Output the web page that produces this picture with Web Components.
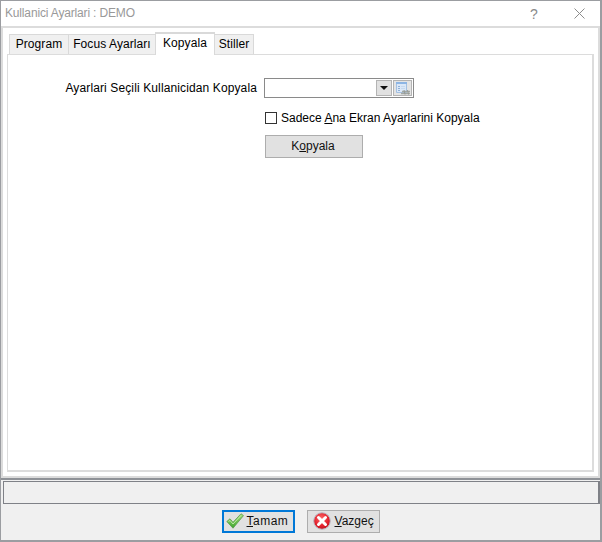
<!DOCTYPE html>
<html><head><meta charset="utf-8"><style>
html,body{margin:0;padding:0;background:#fff}
body{font:12px "Liberation Sans",Arial,sans-serif;color:#000}
</style></head><body>
<app-window></app-window>
<script>
class Base extends HTMLElement{
  constructor(){super();this.attachShadow({mode:'open'}).innerHTML=this.constructor.html}
}
class TitleBar extends Base{static html=`<style>
:host{display:flex;align-items:center;height:25px;flex:none;background:#fff;color:#999;font-size:12px;padding-left:4px}
.t{flex:1;letter-spacing:-.16px;padding-bottom:2px}
.q{width:14px;font-size:14px;color:#8a8a8a;text-align:center;margin-right:33px}
svg{display:block;margin-right:15px;margin-bottom:1px}
</style><span class="t"><slot></slot></span><span class="q">?</span><svg width="11" height="11" viewBox="0 0 11 11"><path d="M.5.5l10 10M10.500.5l-10 10" stroke="#8c8c8c" fill="none"/></svg>`}
class TabItem extends Base{static html=`<style>
:host{display:block;box-sizing:border-box;height:20px;margin-top:2px;padding:2px 0 0;text-align:center;background:#f0f0f0;border:1px solid #d9d9d9;border-bottom:0;margin-left:-1px;color:#000;white-space:nowrap;letter-spacing:.08px}
:host([active]){height:23px;margin-top:0;margin-bottom:-1px;padding-top:2px;background:#fff;position:relative;z-index:1;border-top:2px solid #d9d9d9;border-left-width:1px;border-right-width:1px}
</style><slot></slot>`}
class TabStrip extends Base{static html=`<style>
:host{display:flex;height:22px;padding-left:3px;flex:none}
</style><slot></slot>`}
class TabSheet extends Base{static html=`<style>
:host{display:block;flex:1;background:#fff;border:2px solid #dcdcdc;border-width:1px 2px 2px 1px;box-sizing:border-box;padding:23px 0 0 0}
</style><slot></slot>`}
class PageControl extends Base{static html=`<style>
:host{display:flex;flex-direction:column;flex:1;min-height:0;box-sizing:border-box;background:#fff;border:solid #dcdcdc;border-width:2px 2px 2px 2px;padding:4px 4px 4px 4px}
</style><slot></slot>`}
class LookupBox extends Base{static html=`<style>
:host{display:flex;box-sizing:border-box;width:150px;height:20px;border:1px solid #8a8a8a;background:#fff;justify-content:flex-end;align-items:stretch;padding:1px}
.b{box-sizing:border-box;width:16px;background:#e1e1e1;border:1px solid #b4b4b4;display:flex;align-items:center;justify-content:center;margin-right:1px}
.g{width:19px;margin:0;background:#e4e4e4}
</style><div class="b"><svg width="8" height="4" viewBox="0 0 8 4"><path d="M0 0h8L4 4z" fill="#111"/></svg></div><div class="b g"><svg width="16" height="15" viewBox="0 0 16 15"><path d="M1.500 1.500h10v10h-10z" fill="#dbe8f8" stroke="#a4c1e3"/><path d="M1 1h11v2H1z" fill="#8db5e4"/><path d="M3 5.500h2M3 7.500h2M3 9.500h2" stroke="#8fb0d8"/><path d="M6 5.500h4M6 7.500h4" stroke="#c6d9ef"/><path d="M7 10.500h8M6 12.500h9" stroke="#a3a8a3" stroke-width="1.300"/><path d="M9 9l1 4.500M12.500 9l1 4.500" stroke="#969b96"/></svg></div>`}
class CheckRow extends Base{static html=`<style>
:host{display:flex;align-items:center;gap:4px;height:14px}
i{box-sizing:border-box;display:block;width:12px;height:12px;border:1px solid #333;background:#fff;margin-left:0}
span{position:relative;top:0}
</style><i></i><span><slot></slot></span>`}
class FlatButton extends Base{static html=`<style>
:host{display:flex;align-items:center;justify-content:center;box-sizing:border-box;border:1px solid #adadad;background:#e1e1e1;white-space:nowrap;width:98px;height:23px;color:#111;padding-bottom:1px}
:host([default]){border:2px solid #0078d7}
</style><slot></slot>`}
class FooterBar extends Base{static html=`<style>
:host{display:flex;flex-direction:column;flex:none;height:62px;box-sizing:border-box;background:#f0f0f0;border-top:2px solid #8f9297;padding:1px 0 0 2px}
.s{box-sizing:border-box;height:23px;margin-right:0;border:1px solid #7f8187;border-width:1px 2px 1px 1px;background:#f0f0f0;flex:none}
.a{flex:1;display:flex;justify-content:center;gap:12px;padding:6px 2px 0 0}
</style><div class="s"></div><div class="a"><slot></slot></div>`}
class FormRow extends Base{static html=`<style>
:host{display:flex;align-items:center;margin-left:0}
.l{width:249px;text-align:right;margin-right:7px;letter-spacing:.12px}
</style><span class="l"><slot name="label"></slot></span><slot></slot>`}
class AppWindow extends Base{static html=`<style>
:host{display:flex;flex-direction:column;box-sizing:border-box;width:602px;height:542px;border:1px solid #9b9da1;border-width:1px 2px 2px 1px;background:#fff;font:12px "Liberation Sans",Arial,sans-serif;color:#000}
.c{margin:13px 0 0 257px;height:14px;display:flex;align-items:center}
.k{margin:10px 0 0 257px}
u{text-decoration:underline}
flat-button.i{justify-content:flex-start}
flat-button svg{flex:none}
.k span{margin-left:-2px}
</style>
<title-bar>Kullanici Ayarlari : DEMO</title-bar>
<page-control>
<tab-strip><tab-item style="width:60px">Program</tab-item><tab-item style="width:88px">Focus Ayarları</tab-item><tab-item active style="width:60px">Kopyala</tab-item><tab-item style="width:40px">Stiller</tab-item></tab-strip>
<tab-sheet>
<form-row><span slot="label">Ayarlari Seçili Kullanicidan Kopyala</span><lookup-box></lookup-box></form-row>
<div class="c"><check-row>Sadece <u>A</u>na Ekran Ayarlarini Kopyala</check-row></div>
<div class="k"><flat-button><span>K<u>o</u>pyala</span></flat-button></div>
</tab-sheet>
</page-control>
<footer-bar>
<flat-button class="i" default style="width:73px;height:23px;padding-left:2px"><svg width="18" height="16" viewBox="0 0 18 16" style="margin-right:3px"><defs><linearGradient id="g" x1="0" y1="0" x2="0" y2="1"><stop offset="0" stop-color="#a6e07a"/><stop offset="1" stop-color="#3ea52e"/></linearGradient></defs><path d="M.8 8.500l3.200-2.700 3 3.500L15 .8l2.500 1.800L7 15.200z" fill="url(#g)" stroke="#5b9a50" stroke-width=".8" stroke-linejoin="round"/><path d="M2.500 8.500L4 7.500l3 3.500 8-8.500" fill="none" stroke="#d0f3bb" stroke-width=".8"/></svg><span style="letter-spacing:.5px"><u>T</u>amam</span></flat-button>
<flat-button class="i" style="width:73px;height:23px;padding-left:5px"><svg width="18" height="18" viewBox="0 0 18 18" style="margin-right:4px"><defs><radialGradient id="r" cx=".45" cy=".35" r=".75"><stop offset="0" stop-color="#ff6a6a"/><stop offset=".6" stop-color="#e2202c"/><stop offset="1" stop-color="#b3121e"/></radialGradient></defs><circle cx="9" cy="9" r="8.300" fill="url(#r)" stroke="#b9b9c4"/><path d="M5.500 5.500l7 7M12.500 5.500l-7 7" stroke="#fff" stroke-width="3" stroke-linecap="round"/></svg><span><u>V</u>azgeç</span></flat-button>
</footer-bar>`}
for(const [n,c] of Object.entries({'title-bar':TitleBar,'tab-item':TabItem,'tab-strip':TabStrip,'tab-sheet':TabSheet,'page-control':PageControl,'lookup-box':LookupBox,'check-row':CheckRow,'flat-button':FlatButton,'footer-bar':FooterBar,'form-row':FormRow,'app-window':AppWindow}))customElements.define(n,c);
</script></body></html>
